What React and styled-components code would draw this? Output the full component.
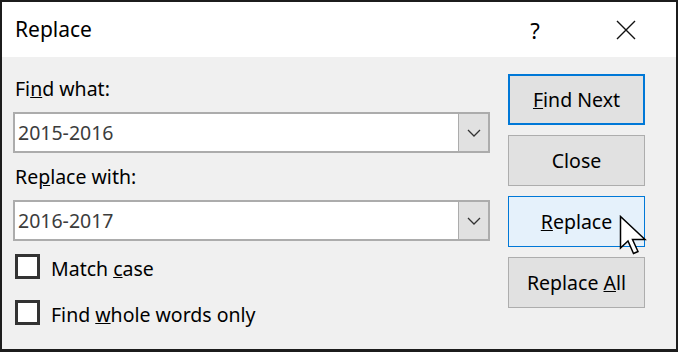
import React from "react"
import styled, { createGlobalStyle } from "styled-components"

const GlobalStyle = createGlobalStyle`
  * { box-sizing: border-box; }
  body {
    margin: 0;
    background: #1c1c1c;
    font-family: "Noto Sans", "Open Sans", sans-serif;
  }
`

const Window = styled.div`
  position: relative;
  width: 678px;
  height: 352px;
  border: 2px solid #1c1c1c;
  border-bottom-width: 3px;
  background: #f0f0f0;
  display: flex;
  flex-direction: column;
`

// 타이틀 바
const TitleBar = styled.div`
  height: 55px;
  background: #fff;
  display: flex;
  align-items: center;
  padding-left: 13px;
  font-size: 21px;
  color: #000;
`

const Title = styled.div`
  flex: 1;
  padding-bottom: 2px;
`

const TitleButton = styled.div`
  width: 90px;
  height: 55px;
  display: flex;
  align-items: center;
  justify-content: center;
  font-size: 22px;
  &:last-child { width: 92px; margin-right: 4px; }
`

const Body = styled.div`
  flex: 1;
  display: flex;
  gap: 18px;
  padding: 17px 31px 0 11px;
`

const Fields = styled.div`
  width: 477px;
  display: flex;
  flex-direction: column;
`

const Label = styled.div`
  height: 30px;
  line-height: 30px;
  font-size: 19.5px;
  color: #000;
  padding-left: 2px;
  margin-top: ${p => p.$top || 0}px;
  margin-bottom: 8px;
`

const Combo = styled.div`
  height: 41px;
  display: flex;
  border: 2px solid #acacac;
  background: #fff;
`

const ComboText = styled.div`
  flex: 1;
  padding-left: 3px;
  line-height: 37px;
  font-size: 19.5px;
  color: #3c3c3c;
`

const ComboArrow = styled.div`
  width: 30px;
  background: #e1e1e1;
  border-left: 1px solid #acacac;
  display: flex;
  align-items: center;
  justify-content: center;
`

const CheckRow = styled.div`
  display: flex;
  align-items: center;
  gap: 11px;
  height: 26px;
  margin-top: ${p => p.$top}px;
  padding-left: 2px;
  font-size: 19.5px;
  color: #000;
`

const Box = styled.div`
  width: 25px;
  height: 25px;
  border: 3px solid #333;
  background: #fff;
`

const CheckText = styled.span`
  padding-top: 4px;
`

const Buttons = styled.div`
  width: 137px;
  display: flex;
  flex-direction: column;
  gap: 10px;
`

const Button = styled.div`
  height: 51px;
  display: flex;
  align-items: center;
  justify-content: center;
  font-size: 19.5px;
  color: #000;
  background: ${p => (p.$hover ? "#e5f1fb" : "#e1e1e1")};
  border: ${p => (p.$default ? "2px solid #0078d7" : p.$hover ? "1px solid #0078d7" : "1px solid #adadad")};
`

const Cursor = styled.svg`
  position: absolute;
  left: 617px;
  top: 213px;
`

const Chevron = () => (
  <svg width="14" height="8" viewBox="0 0 14 8">
    <path d="M1 1 L7 7 L13 1" fill="none" stroke="#333" strokeWidth="1.3" />
  </svg>
)

export default function App() {
  return (
    <Window>
      <GlobalStyle />
      <TitleBar>
        <Title>Replace</Title>
        <TitleButton>?</TitleButton>
        <TitleButton>
          <svg width="20" height="20" viewBox="0 0 20 20">
            <path d="M1 1 L19 19 M19 1 L1 19" stroke="#111" strokeWidth="1.4" />
          </svg>
        </TitleButton>
      </TitleBar>
      <Body>
        <Fields>
          <Label>Fi<u>n</u>d what:</Label>
          <Combo>
            <ComboText>2015-2016</ComboText>
            <ComboArrow><Chevron /></ComboArrow>
          </Combo>
          <Label $top={9}>Re<u>p</u>lace with:</Label>
          <Combo>
            <ComboText>2016-2017</ComboText>
            <ComboArrow><Chevron /></ComboArrow>
          </Combo>
          <CheckRow $top={12}>
            <Box />
            <CheckText>Match <u>c</u>ase</CheckText>
          </CheckRow>
          <CheckRow $top={20}>
            <Box />
            <CheckText>Find <u>w</u>hole words only</CheckText>
          </CheckRow>
        </Fields>
        <Buttons>
          <Button $default><span><u>F</u>ind Next</span></Button>
          <Button>Close</Button>
          <Button $hover><span><u>R</u>eplace</span></Button>
          <Button><span>Replace <u>A</u>ll</span></Button>
        </Buttons>
      </Body>
      <Cursor width="28" height="42" viewBox="0 0 28 42">
        <path
          d="M1.5 1.5 L1.5 33 L9 26 L14.5 38.5 L19 36.5 L13.5 24.5 L26 24.5 Z"
          fill="#fff"
          stroke="#000"
          strokeWidth="1.5"
          strokeLinejoin="miter"
        />
      </Cursor>
    </Window>
  )
}
